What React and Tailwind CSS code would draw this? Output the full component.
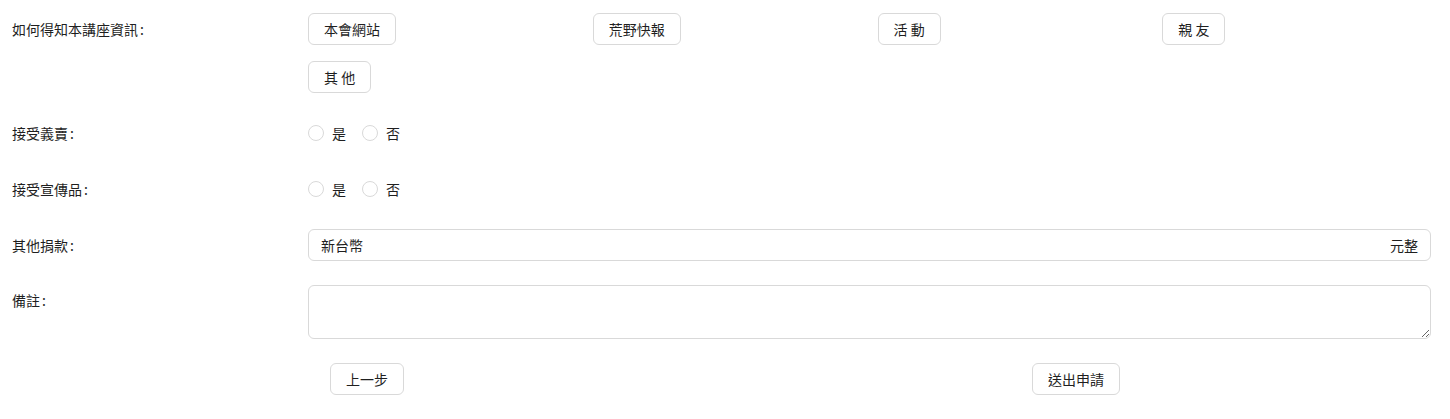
import React from "react";

const font = { fontFamily: '"Noto Sans CJK TC", "Noto Sans", sans-serif' };

function Btn({ children, className = "" }) {
  return (
    <button
      className={`h-8 px-[15px] rounded-md border border-[#d9d9d9] bg-white text-[14px] text-[#1f1f1f] leading-none ${className}`}
    >
      {children}
    </button>
  );
}

function Radio({ label }) {
  return (
    <label className="flex items-center gap-2 mr-4">
      <span className="w-4 h-4 rounded-full border border-[#d9d9d9] bg-white inline-block" />
      <span className="text-[14px] text-[#1f1f1f]">{label}</span>
    </label>
  );
}

function Label({ children }) {
  return (
    <div className="w-[308px] shrink-0 pl-3 text-[14px] text-[#1f1f1f] h-8 flex items-center">
      {children}
      <span className="ml-[2px]">:</span>
    </div>
  );
}

export default function App() {
  return (
    <div className="w-[1450px] h-[419px] bg-white pt-[13px] flex flex-col gap-6" style={font}>
      <div className="flex">
        <Label>如何得知本講座資訊</Label>
        <div className="grid grid-cols-4 gap-x-4 gap-y-4 w-[1123px]">
          <div><Btn>本會網站</Btn></div>
          <div><Btn>荒野快報</Btn></div>
          <div><Btn>活 動</Btn></div>
          <div><Btn>親 友</Btn></div>
          <div><Btn>其 他</Btn></div>
        </div>
      </div>
      <div className="flex">
        <Label>接受義賣</Label>
        <div className="flex items-center h-8">
          <Radio label="是" />
          <Radio label="否" />
        </div>
      </div>
      <div className="flex">
        <Label>接受宣傳品</Label>
        <div className="flex items-center h-8">
          <Radio label="是" />
          <Radio label="否" />
        </div>
      </div>
      <div className="flex">
        <Label>其他捐款</Label>
        <div className="w-[1123px] h-8 rounded-md border border-[#d9d9d9] flex items-center justify-between px-3 text-[14px] text-[#1f1f1f]">
          <span>新台幣</span>
          <span>元整</span>
        </div>
      </div>
      <div className="flex">
        <div className="w-[308px] shrink-0 pl-3 text-[14px] text-[#1f1f1f] pt-[5px]">
          備註<span className="ml-[2px]">:</span>
        </div>
        <textarea className="w-[1123px] h-[54px] rounded-md border border-[#d9d9d9] outline-none px-3 py-1 text-[14px]" />
      </div>
      <div className="flex pl-[330px]">
        <Btn>上一步</Btn>
        <Btn className="ml-[628px]">送出申請</Btn>
      </div>
    </div>
  );
}
